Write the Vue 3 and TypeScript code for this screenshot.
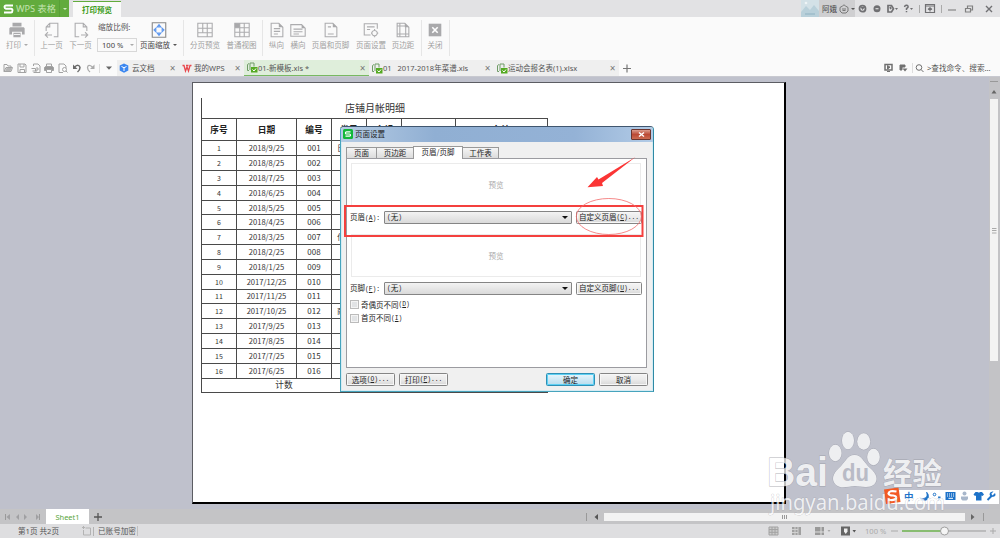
<script setup lang="ts">
interface Tool { name: string; label: string; cls: string; caret?: boolean; d: string; fill?: string; accent?: string }

const page = 'M3.5 2.5H12l4.500 4.500V17.500H3.500Z'
const tools: Record<string, Tool> = {
  print: { name: 'print', label: '打印', cls: 'w34 has-caret', caret: true, d: '', fill: 'M5 2h10v4H5ZM2.500 7h15l1 1v7h-3v-3H4.500v3h-3V8ZM6 13h8v5H6Z' },
  prev: { name: 'prev', label: '上一页', cls: 'w29', d: 'M3.500 11V6.500L7.500 2.500H16.500V17.500H12M7.500 2.500V6.500H3.500M10 15.500H3M5.500 12.500L2.500 15.500L5.500 18.500' },
  next: { name: 'next', label: '下一页', cls: 'w29', d: 'M16.500 11V6.500L12.500 2.500H3.500V17.500H8M12.500 2.500V6.500H16.500M10 15.500H17M14.500 12.500L17.500 15.500L14.500 18.500' },
  zoom: { name: 'zoom', label: '页面缩放', cls: 'w39 dark has-caret', caret: true, d: 'M2.500 2H17.500V18H2.500Z', accent: 'M10 4L12 6.500H8ZM10 16L12 13.500H8ZM4.500 10L6.500 8V12ZM15.500 10L13.500 8V12Z' },
}
const viewTools: Tool[] = [
  { name: 'breaks', label: '分页预览', cls: 'w42', d: 'M2 2.500H18V17.500H2ZM2 8H18M2 13H18M7.500 2.500V13M12.500 2.500V17.500' },
  { name: 'normal', label: '普通视图', cls: 'w31', d: 'M2 2.500H18V17.500H2ZM2 7.500H18M2 12.500H18M7.500 2.500V17.500M12.500 2.500V17.500', fill: 'M2 2.500H7.500V7.500H2Z' },
]
const pageTools: Tool[] = [
  { name: 'portrait', label: '纵向', cls: 'w27', d: page + 'M6.500 8.500H13.500M6.500 11.500H13.500M6.500 14.500H11', fill: 'M12 2.500V7H16.500Z' },
  { name: 'landscape', label: '横向', cls: 'w16', d: 'M2 4H14L18 8V17H2ZM5 9H15M5 12H15M5 14.500H11', fill: 'M14 4V8H18Z' },
  { name: 'header', label: '页眉和页脚', cls: 'w49', d: page + 'M6.500 6.500H10M6.500 14.500H13', fill: 'M12 2.500V7H16.500Z' },
  { name: 'setup', label: '页面设置', cls: 'w32', d: 'M9.500 15.500H2.500V3H17V8.500M5.500 6.500H14M5.500 9.500H9M14 10.500A3 3 0 1 1 13.900 10.500M14 9V10.500M14 16.500V18M10 13.500H11M17 13.500H18' },
  { name: 'margins', label: '页边距', cls: 'w32', d: page + 'M6.500 2.500V17.500M13 5V17.500M3.500 5.500H13M3.500 14.500H16.500', fill: 'M12 2.500V7H16.500Z' },
]

const docs = [
  { text: '01-新模板.xls *', cls: 'active' },
  { text: '01\u00a0\u00a0 2017-2018年菜谱.xls', cls: '' },
  { text: '运动会报名表(1).xlsx', cls: '' },
]

const dates = ['2018/9/25', '2018/8/25', '2018/7/25', '2018/6/25', '2018/5/25', '2018/4/25', '2018/3/25', '2018/2/25', '2018/1/25',
  '2017/12/25', '2017/11/25', '2017/10/25', '2017/9/25', '2017/8/25', '2017/7/25', '2017/6/25']
const kinds: Record<number, string> = { 1: '日用品', 7: '付货款', 12: '商品款' }
const rows = dates.map((date, i) => ({ no: i + 1, date, code: String(i + 1).padStart(3, '0'), kind: kinds[i + 1] ?? '' }))
const headings = ['序号', '日期', '编号', '类目', '金额', '', '备注']
</script>

<template>
  <div class="app">
    <header class="titlebar">
      <div class="brand">
        <svg width="11" height="10" viewBox="0 0 11 10"><path d="M10 1.500H3Q1.500 1.500 1.500 3T3 4.800H8Q9.500 4.800 9.500 6.600T8 8.500H1" fill="none" stroke="#fff" stroke-width="1.900" /></svg>
        <span>WPS 表格</span><i class="brand-drop"><b class="caret white"></b></i>
      </div>
      <div class="ribbon-tab">打印预览</div>
      <div class="spacer"></div>
      <div class="user">
        <svg class="avatar" width="18" height="17" viewBox="0 0 18 17"><path d="M0 0H18V17H0Z" fill="#d3e1e7" /><path d="M0 12L5 6L9 10L13 5L18 11V17H0Z" fill="#b9d0da" /><circle cx="5" cy="3" r="1.300" fill="#eef4f6" /><path d="M4 14H14" stroke="#8fb2c2" /></svg>
        <span>阿娥</span>
        <svg width="10" height="10" viewBox="0 0 10 10"><path d="M5 .8L6.500 2L9 3.500V7L7 9H3L1 7V3.500L3.500 2Z" fill="none" stroke="#777" /><path d="M3 5H7M3.500 6.500H6.500" stroke="#777" /></svg>
        <b class="caret"></b>
      </div>
      <svg class="sysicons" width="145" height="17" viewBox="0 0 145 17" fill="none" stroke="#707073" stroke-width="1.200">
        <circle cx="7.500" cy="8.700" r="3" stroke-width="1.800" /><path d="M5.500 7H10L7.500 10Z" fill="#707073" stroke="none" />
        <circle cx="22" cy="8.700" r="3.500" fill="#707073" stroke="none" /><path d="M20.500 8.700H23.500" stroke="#ddd" />
        <path d="M33 5.500H36.500L38.500 8.700L36.500 12H33ZM35 7L36 9" stroke-width="1.700" /><path d="M40 8L43 8L41.500 10Z" fill="#707073" stroke="none" />
        <path d="M49.500 7Q50 5 51.500 5.200Q53.500 5.500 53 7.300L51.500 8.700V10M51.500 11V12.200" stroke-width="1.500" /><path d="M55 8H58L56.500 10Z" fill="#707073" stroke="none" />
        <path d="M64.500 5V13M86.500 5V13" stroke="#aaa" stroke-width="1" />
        <path d="M70.500 4.500H79.500V12.500H70.500ZM70.500 6H79.500M75 11.500V8M73 9.500L75 7.700L77 9.500" />
        <path d="M93 10H101" stroke="#888" /><path d="M110.500 8.500H115.500V12H110.500ZM112.500 8V6H117.500V10H116" stroke="#808080" />
        <path d="M131 6L137 12M137 6L131 12" stroke-width="1.400" />
      </svg>
    </header>

    <section class="ribbon">
      <div v-for="t in [tools.print]" :key="t.name" class="tool" :class="t.cls">
        <svg width="18" height="18" viewBox="0 0 20 20"><path :d="t.fill" class="solid" /><path d="M6.500 15H13.500" stroke="#fafafa" /></svg>
        <span class="label">{{ t.label }}<b class="caret light"></b></span>
      </div>
      <i class="rule"></i>
      <div class="pair">
        <div v-for="t in [tools.prev, tools.next]" :key="t.name" class="tool" :class="t.cls">
          <svg width="18" height="18" viewBox="0 0 20 20"><path :d="t.d" class="line" /></svg><span class="label">{{ t.label }}</span>
        </div>
      </div>
      <div class="scale"><span>缩放比例:</span><div class="scale-box">100 %<b class="caret light"></b></div></div>
      <div v-for="t in [tools.zoom]" :key="t.name" class="tool" :class="t.cls">
        <svg width="18" height="18" viewBox="0 0 20 20"><path :d="t.d" class="line deep" /><path :d="t.accent" class="line blue" /></svg>
        <span class="label">{{ t.label }}<b class="caret"></b></span>
      </div>
      <i class="rule after-zoom"></i>
      <div v-for="t in viewTools" :key="t.name" class="tool" :class="t.cls">
        <svg width="18" height="18" viewBox="0 0 20 20"><path :d="t.d" class="line" /><path v-if="t.fill" :d="t.fill" class="solid" /></svg><span class="label">{{ t.label }}</span>
      </div>
      <i class="rule after-view"></i>
      <div v-for="t in pageTools" :key="t.name" class="tool" :class="t.cls">
        <svg width="18" height="18" viewBox="0 0 20 20"><path :d="t.d" class="line" /><path v-if="t.fill" :d="t.fill" class="solid" /></svg><span class="label">{{ t.label }}</span>
      </div>
      <i class="rule after-page"></i>
      <div class="tool w26">
        <svg width="18" height="18" viewBox="0 0 20 20"><path d="M3 3H17V17H3Z" class="solid" /><path d="M7 7L13 13M13 7L7 13" stroke="#fff" stroke-width="1.800" /></svg><span class="label">关闭</span>
      </div>
      <i class="rule after-close"></i>
    </section>

    <nav class="doctabs">
      <svg class="quick" width="117" height="16" viewBox="0 0 117 16" fill="none" stroke="#a3a3a3" stroke-width="1">
        <path d="M4 11.500V4.500H7L8 6H11V7.500M4 11.500L6 7.500H12.500L11 11.500Z" /><path d="M5 11L6.500 8H12L10.500 11Z" fill="#b5b5b5" stroke="none" />
        <path d="M18 4H25L26 5V12.500H18ZM20 4V7H24V4M20 12.500V9.500H24.500V12.500" />
        <path d="M33.500 6V4H38L40 6V12.500H33.500M31.500 8.500H35.500V11H32.500M36 8H38V10H36V12" />
        <path d="M45.500 6.500H52.500L53.500 7.500V10.500H44.500V7.500Z" fill="#999" /><path d="M46.500 6V4H51.500V6M46.500 9.500H51.500V12.500H46.500Z" fill="#fafafa" />
        <path d="M63 12.500H59V4H64L66 6V8" /><circle cx="64.500" cy="9.500" r="2" /><path d="M66 11L67.500 12.500" />
        <path d="M74.500 7Q79 3.500 80 7.500Q80 10 77.500 12" stroke="#6a6a6a" stroke-width="1.500" /><path d="M73 4.500V9H77.500Z" fill="#6a6a6a" stroke="none" />
        <path d="M92.500 7Q88 3.500 87.500 7.500Q87.500 10 90 12" stroke="#aaa" stroke-width="1.300" /><path d="M94.500 4.500V9H90Z" fill="#aaa" stroke="none" />
        <path d="M99.500 4V13" stroke="#ddd" /><path d="M106 6.500H112L109 9.700Z" fill="#666" stroke="none" />
      </svg>
      <div class="doc cloud">
        <svg width="10" height="10" viewBox="0 0 10 10"><path d="M5 .5L9.300 2.500V7.500L5 9.700L.7 7.500V2.500Z" fill="#3a86f0" /><path d="M2.500 3.500L5 4.700L7.500 3.500M5 4.700V8" stroke="#fff" fill="none" /></svg>
        <span>云文档</span><i class="x">×</i>
      </div>
      <div class="doc mine">
        <svg width="10" height="9" viewBox="0 0 10 9"><path d="M.5 1.500H2L3.500 7L5 3L6.500 7L8 1.500H9.500M4 1.500H6.500" stroke="#e8474c" stroke-width="1.300" fill="none" /></svg>
        <span>我的WPS</span><i class="x">×</i>
      </div>
      <div v-for="(d, i) in docs" :key="i" class="doc file" :class="d.cls">
        <svg width="12" height="11" viewBox="0 0 12 11"><path d="M3 8.500H1.500V2.500L3 1.500M8 4.500V1H4V8" stroke="#6f9b66" fill="none" /><path d="M5 5H11.500V10.500H5Z" fill="#55aa22" /><path d="M6.500 7.500L8 9L10 6.500" stroke="#fff" fill="none" /></svg>
        <span>{{ d.text }}</span><i class="x">×</i>
      </div>
      <svg width="16" height="16" viewBox="0 0 16 16"><path d="M8 4.500V12.500M4 8.500H12" stroke="#777" stroke-width="1.200" /></svg>
      <div class="spacer"></div>
      <svg width="44" height="16" viewBox="0 0 44 16" fill="none" stroke="#707070">
        <path d="M2 4.500H9V10H2Z" stroke-width="1.500" /><path d="M4.500 5.500L7 7.200L4.500 9ZM4 11.500H7" fill="#707070" />
        <path d="M17 5H22V7H19V10H17Z" fill="#707070" /><path d="M19.500 8.500H24.500L22 11.500Z" fill="#707070" stroke="none" />
        <path d="M29.500 3V13" stroke="#ddd" /><circle cx="36" cy="7.500" r="2.800" /><path d="M38 9.500L40.500 12" />
      </svg>
      <span class="search">&gt;查找命令、搜索...</span>
    </nav>

    <main class="workspace">
      <div class="canvas">
        <div class="sheet">
          <div class="table">
            <div class="caption">店铺月帐明细</div>
            <div class="row head"><div v-for="(h, i) in headings" :key="i" class="cell" :class="'c' + i">{{ h }}</div></div>
            <div v-for="r in rows" :key="r.no" class="row">
              <div class="cell c0 no">{{ r.no }}</div><div class="cell c1">{{ r.date }}</div><div class="cell c2 code">{{ r.code }}</div>
              <div class="cell c3 kind">{{ r.kind }}</div><div class="cell c4"></div><div class="cell c5"></div><div class="cell c6"></div>
            </div>
            <div class="row total"><div class="cell sum">计数</div></div>
          </div>
        </div>
      </div>
      <svg class="vscroll" width="11" height="432" viewBox="0 0 11 432">
        <path d="M1 4.500H9" stroke="#999" /><path d="M2.500 16.500L5 13L7.500 16.500Z" fill="#666" /><path d="M1 22H9V284H1Z" fill="#f3f3f3" />
        <path d="M3 151.500H7.500M3 153.500H7.500M3 156H7.500" stroke="#aaa" />
      </svg>
    </main>

    <div class="sheetbar">
      <svg width="46" height="15" viewBox="0 0 46 15"><path d="M5.500 5V11M39.500 5V11" stroke="#999" /><path d="M10 5V11L6.500 8ZM19 5V11L16 8ZM24 5V11L27 8ZM36 5V11L39 8Z" fill="#a0a0a2" /></svg>
      <div class="sheet-name">Sheet1</div>
      <svg width="18" height="15" viewBox="0 0 18 15"><path d="M9 4V12M5 8H13" stroke="#555" stroke-width="1.300" /></svg>
      <div class="spacer"></div>
      <svg width="19" height="15" viewBox="0 0 19 15"><path d="M1.500 4V12" stroke="#999" /><path d="M13 5V11L9.500 8Z" fill="#555" /></svg>
      <div class="thumb"><i></i><i></i><i></i></div>
      <svg width="35" height="15" viewBox="0 0 35 15"><path d="M6 5V11L9.500 8Z" fill="#666" /><path d="M18.500 4V12" stroke="#999" /></svg>
    </div>

    <footer class="status">
      <span class="pages">第1页 共2页</span>
      <svg width="13" height="14" viewBox="0 0 13 14"><path d="M3.500 4H8.500V11H1.500V6M0 3.500H3M1.500 2V5M11.500 3V12" stroke="#b3b3b3" fill="none" /></svg>
      <span class="lock">已账号加密</span>
      <div class="spacer"></div>
      <svg width="92" height="14" viewBox="0 0 92 14">
        <path d="M1 3H10V11H1ZM1 5.600H10M1 8.300H10M4 3V11M7 3V11" fill="#ccc" stroke="#a2a2a2" />
        <path d="M24 3H33V11H24Z" fill="#a0a0a0" /><path d="M24 5.500H30M24 8.500H30M27 3V11M30 3V11" stroke="#d0d0d0" />
        <path d="M47 3H56V11H47Z" fill="#999" /><path d="M47 8H56M53 3V11" stroke="#dedede" /><path d="M59.500 6H62.500L61 8Z" fill="#aaa" />
        <path d="M73 2.500H82V11.500H73Z" fill="#666" /><path d="M76 4.500H79.500V7.500L77.700 10L76 7.500Z" fill="#eee" /><path d="M84.500 6H88L86.300 8.500Z" fill="#555" />
      </svg>
      <span class="pct">100 %</span>
      <svg width="110" height="14" viewBox="0 0 110 14"><path d="M1 7H8" stroke="#aaa" /><path d="M12 7H54" stroke="#6bb04c" stroke-width="1.300" /><path d="M54 7H96" stroke="#999" /><circle cx="54.500" cy="7" r="4" fill="#f5f5f5" stroke="#a0a0a0" /><path d="M103 4V10M100 7H106" stroke="#aaa" /></svg>
    </footer>

    <div class="dialog">
      <div class="dlg-title">
        <svg width="10" height="10" viewBox="0 0 10 10"><rect width="10" height="10" rx="1.500" fill="#12b838" /><path d="M7.500 2.800H3.500Q2.500 2.800 2.500 3.900T3.500 5H6.500Q7.500 5 7.500 6.100T6.500 7.200H2.500" fill="none" stroke="#fff" stroke-width="1.200" /></svg>
        <span>页面设置</span>
        <div class="dlg-close"><svg width="7" height="7" viewBox="0 0 7 7"><path d="M1 1.500L6 5.500M6 1.500L1 5.500" stroke="#fff" stroke-width="1.500" /></svg></div>
      </div>
      <div class="dlg-tabs"><div class="t1">页面</div><div class="t2">页边距</div><div class="t3">页眉/页脚</div><div class="t4">工作表</div></div>
      <div class="panel">
        <div class="preview first">预览</div>
        <div class="field"><span>页眉<em>(<u>A</u>):</em></span><div class="select"><em>(</em>无<em>)</em><b class="caret black"></b></div><div class="btn custom">自定义页眉<em>(<u>C</u>)...</em></div></div>
        <div class="preview second">预览</div>
        <div class="field low"><span>页脚<em>(<u>F</u>):</em></span><div class="select"><em>(</em>无<em>)</em><b class="caret black"></b></div><div class="btn custom">自定义页脚<em>(<u>U</u>)...</em></div></div>
        <div class="check"><i></i>奇偶页不同<em>(<u>D</u>)</em></div>
        <div class="check"><i></i>首页不同<em>(<u>I</u>)</em></div>
      </div>
      <div class="actions"><div class="btn">选项<em>(<u>O</u>)...</em></div><div class="btn">打印<em>(<u>P</u>)...</em></div><div class="spacer"></div><div class="btn ok">确定</div><div class="btn">取消</div></div>
    </div>

    <svg class="marks" width="320" height="90" viewBox="340 150 320 90">
      <rect x="345" y="206" width="297.500" height="30" fill="none" stroke="#f4403e" stroke-width="2" />
      <ellipse cx="608.800" cy="216.500" rx="32.500" ry="18" fill="none" stroke="#f26b6b" stroke-width=".8" />
      <path d="M587.500 187.200L597 177L598.500 179.500L635.500 157L602 183L603 186Z" fill="#fb3535" />
    </svg>

    <div class="ime">
      <svg width="116" height="18" viewBox="0 0 116 18">
        <path d="M1 2.500L15.500 .5L17.500 15L3 17Z" fill="#f35a24" /><path d="M13.500 4.500Q6 3 5.500 6.500Q6 8.500 10 8.500Q14 9 13 11.500Q11 14 5 12.500" fill="none" stroke="#fff" stroke-width="2.200" />
        <text x="21" y="12.700" class="zh">中</text>
        <path d="M43.500 5Q46 12.500 37 11.500Q43 16 45.500 10.500Q46 7 43.500 5Z" fill="#1e73c9" stroke="#1e73c9" stroke-width=".6" />
        <circle cx="51.500" cy="7.500" r="1.300" fill="none" stroke="#1e73c9" /><path d="M55 9.500H57.500V11.500L55.500 13.500" fill="#1e73c9" />
        <path d="M62.500 5H72.500V13H62.500Z" fill="#1e73c9" /><path d="M64 7H71.500M64 9H71.500" stroke="#fff" stroke-dasharray="1 1" /><path d="M65.500 11.300H70" stroke="#fff" />
        <circle cx="81.500" cy="6.500" r="2" fill="#a8b7cb" /><path d="M78 9.500H85V12L83.500 13.500H79.500L78 12Z" fill="#a8b7cb" />
        <path d="M92.500 5L90.500 7.500L92 9L93 8.500V13.500H98.500V8.500L99.500 9L101 7.500L99 5H97Q96 6.200 94.500 5Z" fill="#1e73c9" />
        <path d="M104.500 13L109 8.500" stroke="#1e73c9" stroke-width="2" /><path d="M112 6L109.500 8.500L108.300 6.700L110.500 4.500Q107 4 106.500 7Q107 10.500 110.500 9.700Q113.500 9 112 6Z" fill="#1e73c9" />
      </svg>
    </div>

    <svg class="watermark" width="190" height="95" viewBox="762 425 190 95">
      <g class="wm">
        <text x="767" y="486" class="bai" textLength="61" lengthAdjust="spacingAndGlyphs">Bai</text>
        <ellipse cx="835.300" cy="453" rx="6.300" ry="8.300" /><ellipse cx="848" cy="440.500" rx="6" ry="8.800" /><ellipse cx="863.700" cy="441.500" rx="6.500" ry="8.300" /><ellipse cx="873.500" cy="457" rx="6.300" ry="8.300" />
        <path d="M854.500 455C862 455 864 463 870 468C877 474 878.500 480 874 484.500C868 489 861 486 855 486C848 486 842 489.500 836 485C831 480 832.500 474 839 468C845 463 847 455 854.500 455Z" />
        <text x="883" y="483.500" class="jy" textLength="59">经验</text>
        <text x="770" y="509.500" class="url" textLength="175" lengthAdjust="spacingAndGlyphs">jingyan.baidu.com</text>
      </g>
      <text x="842" y="481" class="du" textLength="27" lengthAdjust="spacingAndGlyphs">du</text>
    </svg>
  </div>
</template>

<style>
html, body { margin: 0; overflow: hidden; }
</style>

<style scoped>
.app { position: relative; width: 1000px; height: 538px; display: flex; flex-direction: column; overflow: hidden; font: 7.6px/10px "Noto Sans", "Noto Sans CJK SC", sans-serif; color: #555; background: #fafafa; }
.app * { box-sizing: border-box; }
svg { display: block; flex: none; }
i, em { font-style: normal; }
span, .btn, .label { white-space: nowrap; }
.spacer { flex: 1; }
.caret { display: inline-block; flex: none; border: 2px solid transparent; border-top: 2.500px solid #555; border-bottom: 0; width: 0; height: 0; }
.caret.white { border-top-color: #d6edc8; }
.caret.light { border-top-color: #aaa; }
.caret.black { border-width: 3px 3px 0; border-top-color: #111; }

.titlebar { height: 17px; flex: none; display: flex; background: #e2e2e4; }
.brand { width: 69px; display: flex; align-items: center; padding-left: 3px; background: #62ab3d; color: #c3e3b0; font-size: 9.200px; }
.brand span { margin-left: 2px; width: 43px; }
.brand-drop { display: flex; align-items: center; justify-content: center; border-left: 1px solid #58a035; height: 17px; width: 10px; }
.ribbon-tab { width: 48px; margin: 1px 0 0 4px; padding-top: 3px; text-align: center; background: #fafafa; border-top: 1px solid #62ab3d; color: #3f9d22; font-weight: 600; font-size: 7.500px; }
.user { width: 54px; display: flex; align-items: center; background: #cfcfd1; color: #444; gap: 2px; }
.user span { margin-left: 1px; font-size: 7.500px; }

.ribbon { height: 43px; flex: none; display: flex; background: #fafafa; }
.tool { display: flex; flex-direction: column; align-items: center; padding-top: 4px; color: #a0a0a0; font-size: 7.500px; }
.label { margin-top: 1px; display: flex; align-items: center; justify-content: center; height: 10px; }
.has-caret .label { gap: 3px; }
.dark { color: #444; }
.solid { fill: #a9a9ab; }
.line { fill: none; stroke: #acacae; stroke-width: 1.200; }
.deep { stroke: #888; }
.blue { stroke: #5b96ef; }
.w34 { width: 34px; } .w29 { width: 29px; } .w39 { width: 39px; } .w42 { width: 42px; } .w31 { width: 31px; } .w27 { width: 27px; }
.w16 { width: 16px; } .w49 { width: 49px; } .w32 { width: 32px; } .w26 { width: 26px; }
.rule { width: 1px; flex: none; height: 36px; margin-top: 3px; background: #e6e6e6; }
.pair { display: flex; margin-left: 2px; }
.scale { width: 44px; padding: 5px 0 0 3px; color: #555; display: flex; flex-direction: column; }
.scale-box { width: 40px; height: 14px; margin: 6px 0 0 -1px; padding: 0 2px 0 4px; border: 1px solid #d8d8d8; display: flex; align-items: center; justify-content: space-between; color: #444; }
.after-zoom { margin-left: 5px; } .after-view { margin-left: 5px; } .after-page { margin-left: 2px; } .after-close { margin-left: 1px; }

.doctabs { height: 17px; flex: none; display: flex; border-bottom: 1px solid #c8c9d0; background: #fafafa; }
.doc { height: 16px; display: flex; align-items: center; background: #efefef; font-size: 7.500px; }
.doc span { flex: 1; margin-left: 3px; }
.x { font-size: 10px; width: 13px; text-align: center; color: #777; }
.cloud { width: 62px; padding-left: 2px; }
.mine { width: 65px; padding-left: 3px; }
.mine span { margin-left: 2px; }
.file { width: 125px; padding-left: 2px; }
.file span { margin-left: 0; font-size: 7.500px; }
.active { background: #dfeedb; border-bottom: 1px solid #78b962; }
.search { width: 73px; padding: 3px 0 0 0; color: #555; font-size: 7.600px; }

.workspace { height: 432px; flex: none; display: flex; background: #bfc1cc; }
.canvas { width: 989px; padding: 5px 0 0 192px; }
.vscroll { background: #c3c3c6; }
.sheet { width: 594px; height: 422px; padding: 15px 0 0 8px; background: #fff; border: 1px solid #5c5d63; border-right: 2px solid #000; border-bottom: 2px solid #000; color: #333; font-family: "Noto Sans CJK SC", sans-serif; }
.table { width: 347px; }
.caption { height: 20px; border-left: 1px solid #444; text-align: center; font-size: 10px; line-height: 20px; color: #333; }
.row { display: flex; height: 14.830px; border-top: 1px solid #4a4a4a; }
.row.head { height: 22.300px; font-weight: 700; font-size: 8.700px; color: #222; }
.row.total { height: 15.700px; border-bottom: 1px solid #4a4a4a; font-size: 8.700px; }
.cell { border-left: 1px solid #4a4a4a; display: flex; align-items: center; justify-content: center; overflow: hidden; white-space: nowrap; }
.cell.c6 { border-right: 1px solid #4a4a4a; }
.c0 { width: 35px; } .c1 { width: 60px; } .c2 { width: 35px; } .c3 { width: 35px; } .c4 { width: 35px; } .c5 { width: 54px; } .c6 { width: 93px; }
.no { font-size: 7px; } .code { font-size: 8px; }
.kind { font-size: 8px; }
.sum { width: 347px; padding-right: 181px; border-right: 1px solid #4a4a4a; }

.sheetbar { height: 15px; flex: none; display: flex; background: #c4c4c6; }
.sheet-name { width: 43px; background: #fff; color: #58a63c; text-align: center; line-height: 16px; font-size: 7.500px; }
.thumb { width: 361px; height: 8px; margin-top: 4px; background: #f3f3f3; display: flex; justify-content: center; align-items: center; gap: 1px; }
.thumb i { width: 1px; height: 4px; background: #999; }
.status { height: 14px; flex: none; display: flex; align-items: center; background: #dedee0; color: #555; font-size: 7.600px; }
.pages { width: 64px; margin-left: 18px; }
.lock { margin-left: 3px; padding-right: 1px; border-right: 1px solid #c0c0c0; }
.status svg + .pct { margin-left: 5px; width: 25px; color: #aaa; }

.dialog { position: absolute; left: 340px; top: 126px; width: 314px; height: 266px; display: flex; flex-direction: column; background: #f0f0f0; border: 1px solid #47a4bd; border-top-color: #40566f; border-right-color: #2f8aa5; border-radius: 4px 4px 0 0; color: #222; font: 7.500px/10px "Noto Sans CJK SC", sans-serif; overflow: hidden; box-shadow: inset 0 0 0 1px #d5ebf3; }
.dialog em { font: 6.300px "Liberation Mono", monospace; }
.dlg-title { height: 15px; flex: none; display: flex; align-items: center; padding: 0 2px 1px; background: linear-gradient(90deg, #b6cce4, #90afd3 30%, #94b2d6 75%, #b2cbe6); }
.dlg-title span { flex: 1; margin-left: 2px; }
.dlg-close { width: 20px; height: 11px; display: flex; align-items: center; justify-content: center; background: linear-gradient(#dc9d8e, #bb4a35 50%, #cc6b51); border: 1px solid #6d352e; border-radius: 1px; }
.dlg-tabs { height: 16px; flex: none; display: flex; align-items: flex-end; padding-left: 5px; }
.dlg-tabs div { height: 11px; display: flex; align-items: center; justify-content: center; border: 1px solid #999; border-bottom: 0; background: linear-gradient(#f5f5f5, #dcdcdc); margin-right: -1px; }
.dlg-tabs .t1 { width: 31px; } .dlg-tabs .t2 { width: 38px; } .dlg-tabs .t4 { width: 37px; }
.dlg-tabs .t3 { width: 50px; height: 13px; background: #fff; margin-bottom: -1px; position: relative; z-index: 1; padding-bottom: 2px; }
.panel { margin: 0 6px 0 5px; height: 210px; flex: none; background: #fff; border: 1px solid #9b9ba0; padding: 4px 4px 0 4px; }
.preview { border: 1px solid #ebebeb; display: flex; justify-content: center; color: #aaa; margin-right: 1px; }
.first { height: 43px; padding-top: 16px; }
.second { height: 43px; margin-top: 10px; padding-top: 16px; }
.field { display: flex; align-items: center; height: 14px; margin-top: 4px; }
.field > span { width: 34px; margin-left: -1px; }
.select { width: 188px; height: 13px; display: flex; align-items: center; padding: 0 3px 0 2px; border: 1px solid #858585; border-radius: 1px; background: linear-gradient(#f3f3f3, #dadada); }
.select .caret { margin-left: auto; }
.btn { width: 49px; height: 13px; display: flex; align-items: center; justify-content: center; border: 1px solid #858585; border-radius: 1.500px; background: linear-gradient(#f4f4f4, #ebebeb 50%, #d8d8d8); box-shadow: inset 0 0 0 1px #f7f7f7; }
.custom { width: 66px; margin-left: 4px; flex: none; }
.field.low { margin-top: 4px; margin-bottom: 3px; }
.check { height: 13.500px; display: flex; align-items: center; }
.check i { width: 9px; height: 9px; margin: 0 2px 0 -1px; border: 1px solid #bbb; background: #e1e3e5; box-shadow: inset 0 0 0 1px #f4f4f4; }
.actions { display: flex; gap: 4px; padding: 5px 5px 0 5px; }
.ok { border-color: #2e8fb5; background: linear-gradient(#e8f5fb, #cfe9f5 50%, #b9dcec); box-shadow: inset 0 0 0 1px #5ed0f3; }

.marks { position: absolute; left: 340px; top: 150px; }
.ime { position: absolute; left: 883px; top: 487px; width: 116px; height: 18px; background: linear-gradient(#fff, #fff) 8px 3px / 108px 14px no-repeat; }
.zh { font: 700 9.500px "Noto Sans CJK SC", sans-serif; fill: #1e73c9; }
.watermark { position: absolute; left: 762px; top: 425px; }
.wm { fill: #fff; opacity: .74; stroke: #9799a3; stroke-width: .8; paint-order: stroke; }
.bai { font: 700 40px "Liberation Sans", sans-serif; }
.jy { font: 700 29.500px "Noto Sans CJK SC", sans-serif; }
.url { font: 21px "Noto Sans", sans-serif; stroke-width: .5; }
.du { font: 700 24px "Liberation Sans", sans-serif; fill: #b9bbc6; }
</style>
